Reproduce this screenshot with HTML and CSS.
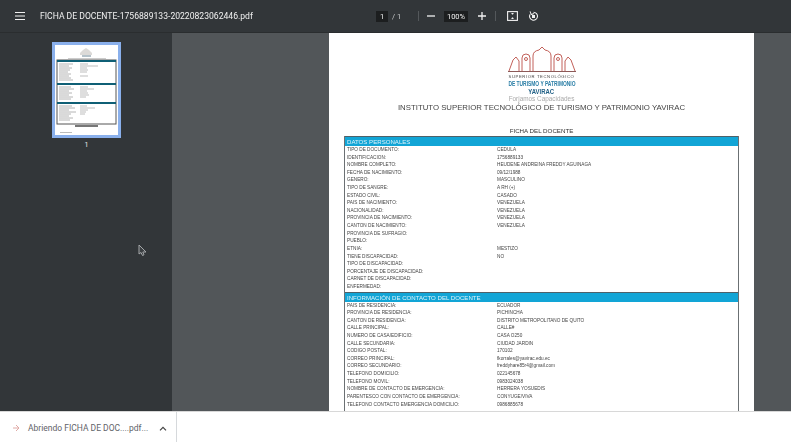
FILE: index.html
```html
<!DOCTYPE html>
<html lang="es">
  <head>
    <meta charset="utf-8" />
    <title>FICHA DE DOCENTE</title>
    <link rel="stylesheet" href="styles.css">
  </head>
  <body>
    <header class="toolbar">
      <svg class="menu" width="10" height="8" viewBox="0 0 10 8"><path d="M0 .5h10M0 4h10M0 7.5h10" stroke="#f1f1f1" stroke-width="1.2"/></svg>
      <span class="file-name">FICHA DE DOCENTE-1756889133-20220823062446.pdf</span>
      <div class="controls">
        <span class="num-box page-box">1</span>
        <span class="page-total">/ 1</span>
        <span class="sep sep-a"></span>
        <svg class="minus" width="8" height="8" viewBox="0 0 8 8"><path d="M0 4h8" stroke="#f1f1f1" stroke-width="1.3"/></svg>
        <span class="num-box zoom-box">100%</span>
        <svg class="plus" width="8" height="8" viewBox="0 0 8 8"><path d="M0 4h8M4 0v8" stroke="#f1f1f1" stroke-width="1.3"/></svg>
        <span class="sep sep-b"></span>
        <svg class="fit" width="11" height="10" viewBox="0 0 11 10"><rect x=".6" y=".6" width="9.8" height="8.8" fill="none" stroke="#f1f1f1" stroke-width="1.1"/><path d="M5.5 2v1.5M4.4 2.6h2.2M5.5 8V6.5M4.4 7.4h2.2" stroke="#f1f1f1" stroke-width="1"/></svg>
        <svg class="rotate" width="11" height="11" viewBox="0 0 11 11"><path d="M5.5 1.2a4 4 0 1 1-3.6 2.3" fill="none" stroke="#f1f1f1" stroke-width="1.1"/><path d="M3 .2v3.4h3.2" fill="none" stroke="#f1f1f1" stroke-width="1" transform="rotate(-20 3 3)"/><rect x="4" y="4" width="3" height="3" fill="#f1f1f1"/></svg>
      </div>
    </header>

    <main class="main">
      <aside class="sidebar">
        <div class="thumb">
          <svg width="63" height="90" viewBox="0 0 63 90">
            <rect width="63" height="90" fill="#fff"/>
            <path d="M25 8l3-3 3-2 3 2 3 3v2H25z" fill="#dcdad8"/>
            <rect x="27" y="10" width="9" height="2" fill="#b5c2ca"/>
            <rect x="13" y="13" width="38" height="1" fill="#ccc"/>
            <rect x="25" y="17" width="12" height="1" fill="#bbb"/>
            <rect x="2" y="15" width="59" height="64" fill="#fff" stroke="#555" stroke-width="1"/>
            <rect x="2" y="15" width="59" height="2" fill="#0f5f75"/>
            <rect x="2" y="38" width="59" height="2" fill="#0f5f75"/>
            <rect x="2" y="57" width="59" height="2" fill="#0f5f75"/>
            <path d="M4 19h14M4 21h10M4 23h13M4 25h11M4 27h9M4 29h12M4 31h10M4 33h12M4 35h14M4 42h12M4 44h15M4 46h10M4 48h13M4 50h10M4 52h14M4 54h12M4 61h13M4 63h16M4 65h10M4 67h17M4 69h12M4 71h10M4 73h14M4 75h11" stroke="#b4b4b4" stroke-width="1"/>
            <path d="M25 19h8M25 21h18M25 23h7M25 25h8M25 27h7M25 31h8M25 42h8M25 44h14M25 46h7M25 48h8M25 50h9M25 52h6M25 61h7M25 63h15M25 65h8M25 67h6M25 69h5" stroke="#bdbdbd" stroke-width="1"/>
            <rect x="20" y="80" width="23" height="2" fill="#777"/>
            <rect x="5" y="87" width="12" height="1" fill="#bbb"/>
          </svg>
        </div>
        <span class="thumb-num">1</span>
      </aside>

      <section class="viewer">
        <article class="pdf-page">
          <div class="logo">
            <svg width="68" height="26" viewBox="0 0 68 26">
              <g fill="none" stroke="#c2615a" stroke-width="1">
                <path d="M1 24l4-11 3-3 3 4v10M14 24V11a4 4 0 0 1 8 0v13M25 24V9q0-5 6-6l3-3 3 3q6 1 6 6v15M46 24V11a4 4 0 0 1 8 0v13M57 24V14l3-4 3 3 4 11"/>
                <path d="M0 24.500h68" stroke="#8c5a58"/>
                <circle cx="18" cy="12" r="1.500"/>
                <circle cx="50" cy="12" r="1.500"/>
              </g>
            </svg>
            <span class="logo-small">SUPERIOR TECNOLÓGICO</span>
            <span class="logo-big">DE TURISMO Y PATRIMONIO</span>
            <span class="logo-name">YAVIRAC</span>
            <span class="logo-motto">Forjamos Capacidades</span>
          </div>
          <h1 class="inst">INSTITUTO SUPERIOR TECNOLÓGICO DE TURISMO Y PATRIMONIO YAVIRAC</h1>
          <h2 class="doc-title">FICHA DEL DOCENTE</h2>

          <div class="sheet">
            <div class="sheet-head">DATOS PERSONALES</div>
            <dl class="rows">
              <dt>TIPO DE DOCUMENTO:</dt><dd>CEDULA</dd>
              <dt>IDENTIFICACION:</dt><dd>1756889133</dd>
              <dt>NOMBRE COMPLETO:</dt><dd>HEUDENE ANDREINA FREDDY AGUINAGA</dd>
              <dt>FECHA DE NACIMIENTO:</dt><dd>09/12/1988</dd>
              <dt>GENERO:</dt><dd>MASCULINO</dd>
              <dt>TIPO DE SANGRE:</dt><dd>A RH (+)</dd>
              <dt>ESTADO CIVIL:</dt><dd>CASADO</dd>
              <dt>PAIS DE NACIMIENTO:</dt><dd>VENEZUELA</dd>
              <dt>NACIONALIDAD:</dt><dd>VENEZUELA</dd>
              <dt>PROVINCIA DE NACIMIENTO:</dt><dd>VENEZUELA</dd>
              <dt>CANTON DE NACIMIENTO:</dt><dd>VENEZUELA</dd>
              <dt>PROVINCIA DE SUFRAGIO:</dt><dd></dd>
              <dt>PUEBLO:</dt><dd></dd>
              <dt>ETNIA:</dt><dd>MESTIZO</dd>
              <dt>TIENE DISCAPACIDAD:</dt><dd>NO</dd>
              <dt>TIPO DE DISCAPACIDAD:</dt><dd></dd>
              <dt>PORCENTAJE DE DISCAPACIDAD:</dt><dd></dd>
              <dt>CARNET DE DISCAPACIDAD:</dt><dd></dd>
              <dt>ENFERMEDAD:</dt><dd></dd>
            </dl>
            <div class="sheet-head">INFORMACIÓN DE CONTACTO DEL DOCENTE</div>
            <dl class="rows">
              <dt>PAIS DE RESIDENCIA:</dt><dd>ECUADOR</dd>
              <dt>PROVINCIA DE RESIDENCIA:</dt><dd>PICHINCHA</dd>
              <dt>CANTON DE RESIDENCIA:</dt><dd>DISTRITO METROPOLITANO DE QUITO</dd>
              <dt>CALLE PRINCIPAL:</dt><dd>CALLE#</dd>
              <dt>NUMERO DE CASA/EDIFICIO:</dt><dd>CASA O250</dd>
              <dt>CALLE SECUNDARIA:</dt><dd>CIUDAD JARDIN</dd>
              <dt>CODIGO POSTAL:</dt><dd>170102</dd>
              <dt>CORREO PRINCIPAL:</dt><dd>fkorrales@yavirac.edu.ec</dd>
              <dt>CORREO SECUNDARIO:</dt><dd>freddyhare85r4@gmail.com</dd>
              <dt>TELEFONO DOMICILIO:</dt><dd>022145678</dd>
              <dt>TELEFONO MOVIL:</dt><dd>0983024038</dd>
              <dt>NOMBRE DE CONTACTO DE EMERGENCIA:</dt><dd>HERRERA YOSUEDIS</dd>
              <dt>PARENTESCO CON CONTACTO DE EMERGENCIA:</dt><dd>CONYUGE/VIVA</dd>
              <dt>TELEFONO CONTACTO EMERGENCIA DOMICILIO:</dt><dd>0986885678</dd>
            </dl>
          </div>
        </article>
      </section>

      <svg class="cursor" width="9" height="13" viewBox="0 0 9 13"><path d="M1 1v9l2-1.500 1.500 3 1.500-.7L4.800 8H8z" fill="#3b3f42" stroke="#a4a7a9" stroke-width="1"/></svg>
    </main>

    <footer class="downloads">
      <div class="chip">
        <svg class="chip-icon" width="7" height="8" viewBox="0 0 7 8"><path d="M0 4h6M3 1l3 3-3 3" fill="none" stroke="#e0aaa6" stroke-width="1"/></svg>
        <span class="chip-text">Abriendo FICHA DE DOC....pdf...</span>
        <svg class="chip-arrow" width="8" height="5" viewBox="0 0 8 5"><path d="M1 4.300l3-3 3 3" fill="none" stroke="#444" stroke-width="1.200"/></svg>
      </div>
    </footer>
  </body>
</html>
```

FILE: styles.css
```css
* {
  box-sizing: border-box;
}

html,
body {
  margin: 0;
  height: 442px;
  overflow: hidden;
}

body {
  display: flex;
  flex-direction: column;
  font-family: "Roboto", "Liberation Sans", sans-serif;
  background-color: #fff;
}

/* top bar */
.toolbar {
  display: flex;
  align-items: center;
  height: 33px;
  flex: none;
  padding-left: 15px;
  background-color: #323639;
  border-bottom: 1px solid #2a2d2f;
  color: #f1f1f1;
  filter: blur(0.4px);
}

.file-name {
  margin-left: 15px;
  width: 336px;
  font-size: 8.6px;
}

.controls {
  display: flex;
  align-items: center;
}

.num-box {
  display: flex;
  align-items: center;
  justify-content: center;
  height: 11px;
  background-color: #1c1e1f;
  font-size: 7.5px;
}

.page-box {
  width: 12px;
}

.page-total {
  width: 30px;
  padding-left: 4px;
  font-size: 7.5px;
  color: #c4c6c8;
}

.sep {
  width: 1px;
  height: 10px;
  background-color: #54585b;
}

.minus {
  margin-left: 8px;
}

.zoom-box {
  width: 24px;
  margin-left: 9px;
}

.plus {
  margin-left: 10px;
}

.sep-b {
  margin-left: 9px;
}

.fit {
  margin-left: 11px;
}

.rotate {
  margin-left: 10px;
}

/* middle */
.main {
  position: relative;
  display: flex;
  flex: 1;
  min-height: 0;
}

.sidebar {
  display: flex;
  flex-direction: column;
  align-items: center;
  width: 172px;
  flex: none;
  padding: 9px 0 0 1px;
  background-color: #323639;
}

.thumb {
  display: flex;
  padding: 3px;
  background-color: #8ab0ec;
  filter: blur(0.4px);
}

.thumb-num {
  margin-top: 3px;
  font-size: 7px;
  color: #e8eaed;
}

.viewer {
  flex: 1;
  overflow: hidden;
  padding-left: 157px;
  background-color: #525659;
}

.cursor {
  position: absolute;
  left: 138px;
  top: 211px;
}

/* pdf page */
.pdf-page {
  display: flex;
  flex-direction: column;
  align-items: center;
  width: 425px;
  height: 378px;
  overflow: hidden;
  padding: 14px 15px 0;
  background-color: #fff;
  filter: blur(0.55px);
}

.logo {
  display: flex;
  flex-direction: column;
  align-items: center;
  width: 68px;
  white-space: nowrap;
}

.logo-small {
  margin-top: 1px;
  font-family: "Liberation Sans", sans-serif;
  font-size: 4.2px;
  letter-spacing: 0.6px;
  line-height: 5px;
  color: #444;
}

.logo-big {
  font-family: "Liberation Sans", sans-serif;
  font-size: 7px;
  font-weight: bold;
  line-height: 9px;
  transform: scaleX(0.7);
  color: #2a7ea6;
}

.logo-name {
  font-family: "Liberation Sans", sans-serif;
  font-size: 7px;
  font-weight: bold;
  line-height: 8px;
  transform: scaleX(0.85);
  color: #1f5f85;
}

.logo-motto {
  font-family: "Liberation Sans", sans-serif;
  font-size: 6.4px;
  line-height: 6px;
  color: #aaa;
}

.inst {
  margin: 1px 0 0;
  font-family: "Liberation Sans", sans-serif;
  font-size: 7.8px;
  font-weight: normal;
  line-height: 9px;
  white-space: nowrap;
  color: #444;
}

.doc-title {
  margin: 15px 0 0;
  font-family: "Liberation Sans", sans-serif;
  font-size: 6.2px;
  font-weight: normal;
  line-height: 8px;
  color: #333;
}

.sheet {
  width: 395px;
  min-height: 300px;
  margin-top: 1px;
  border: 1px solid #6b7073;
  border-top-width: 0;
  flex: none;
  font-family: "Liberation Sans", sans-serif;
}

.sheet-head {
  height: 10px;
  padding-left: 2px;
  background-color: #12a5d6;
  border-top: 1px solid #4e6169;
  font-size: 6.1px;
  line-height: 9px;
  color: #dff3fa;
}

.rows {
  display: grid;
  grid-template-columns: 150px 1fr;
  grid-auto-rows: 7.62px;
  margin: 0;
  padding: 0 2px 1px;
  font-size: 4.7px;
  line-height: 7.62px;
  color: #444;
}

.rows dt,
.rows dd {
  margin: 0;
  white-space: nowrap;
}

/* downloads shelf */
.downloads {
  display: flex;
  height: 31px;
  flex: none;
  background-color: #fff;
  border-top: 1px solid #d8d8d8;
}

.chip {
  display: flex;
  align-items: center;
  width: 177px;
  padding: 2px 0 0 13px;
  border-right: 1px solid #d6d9dc;
  color: #5f6368;
}

.chip-text {
  margin-left: 8px;
  width: 130px;
  font-size: 8.5px;
  white-space: nowrap;
}

.chip-arrow {
  margin-left: 1px;
}
```
